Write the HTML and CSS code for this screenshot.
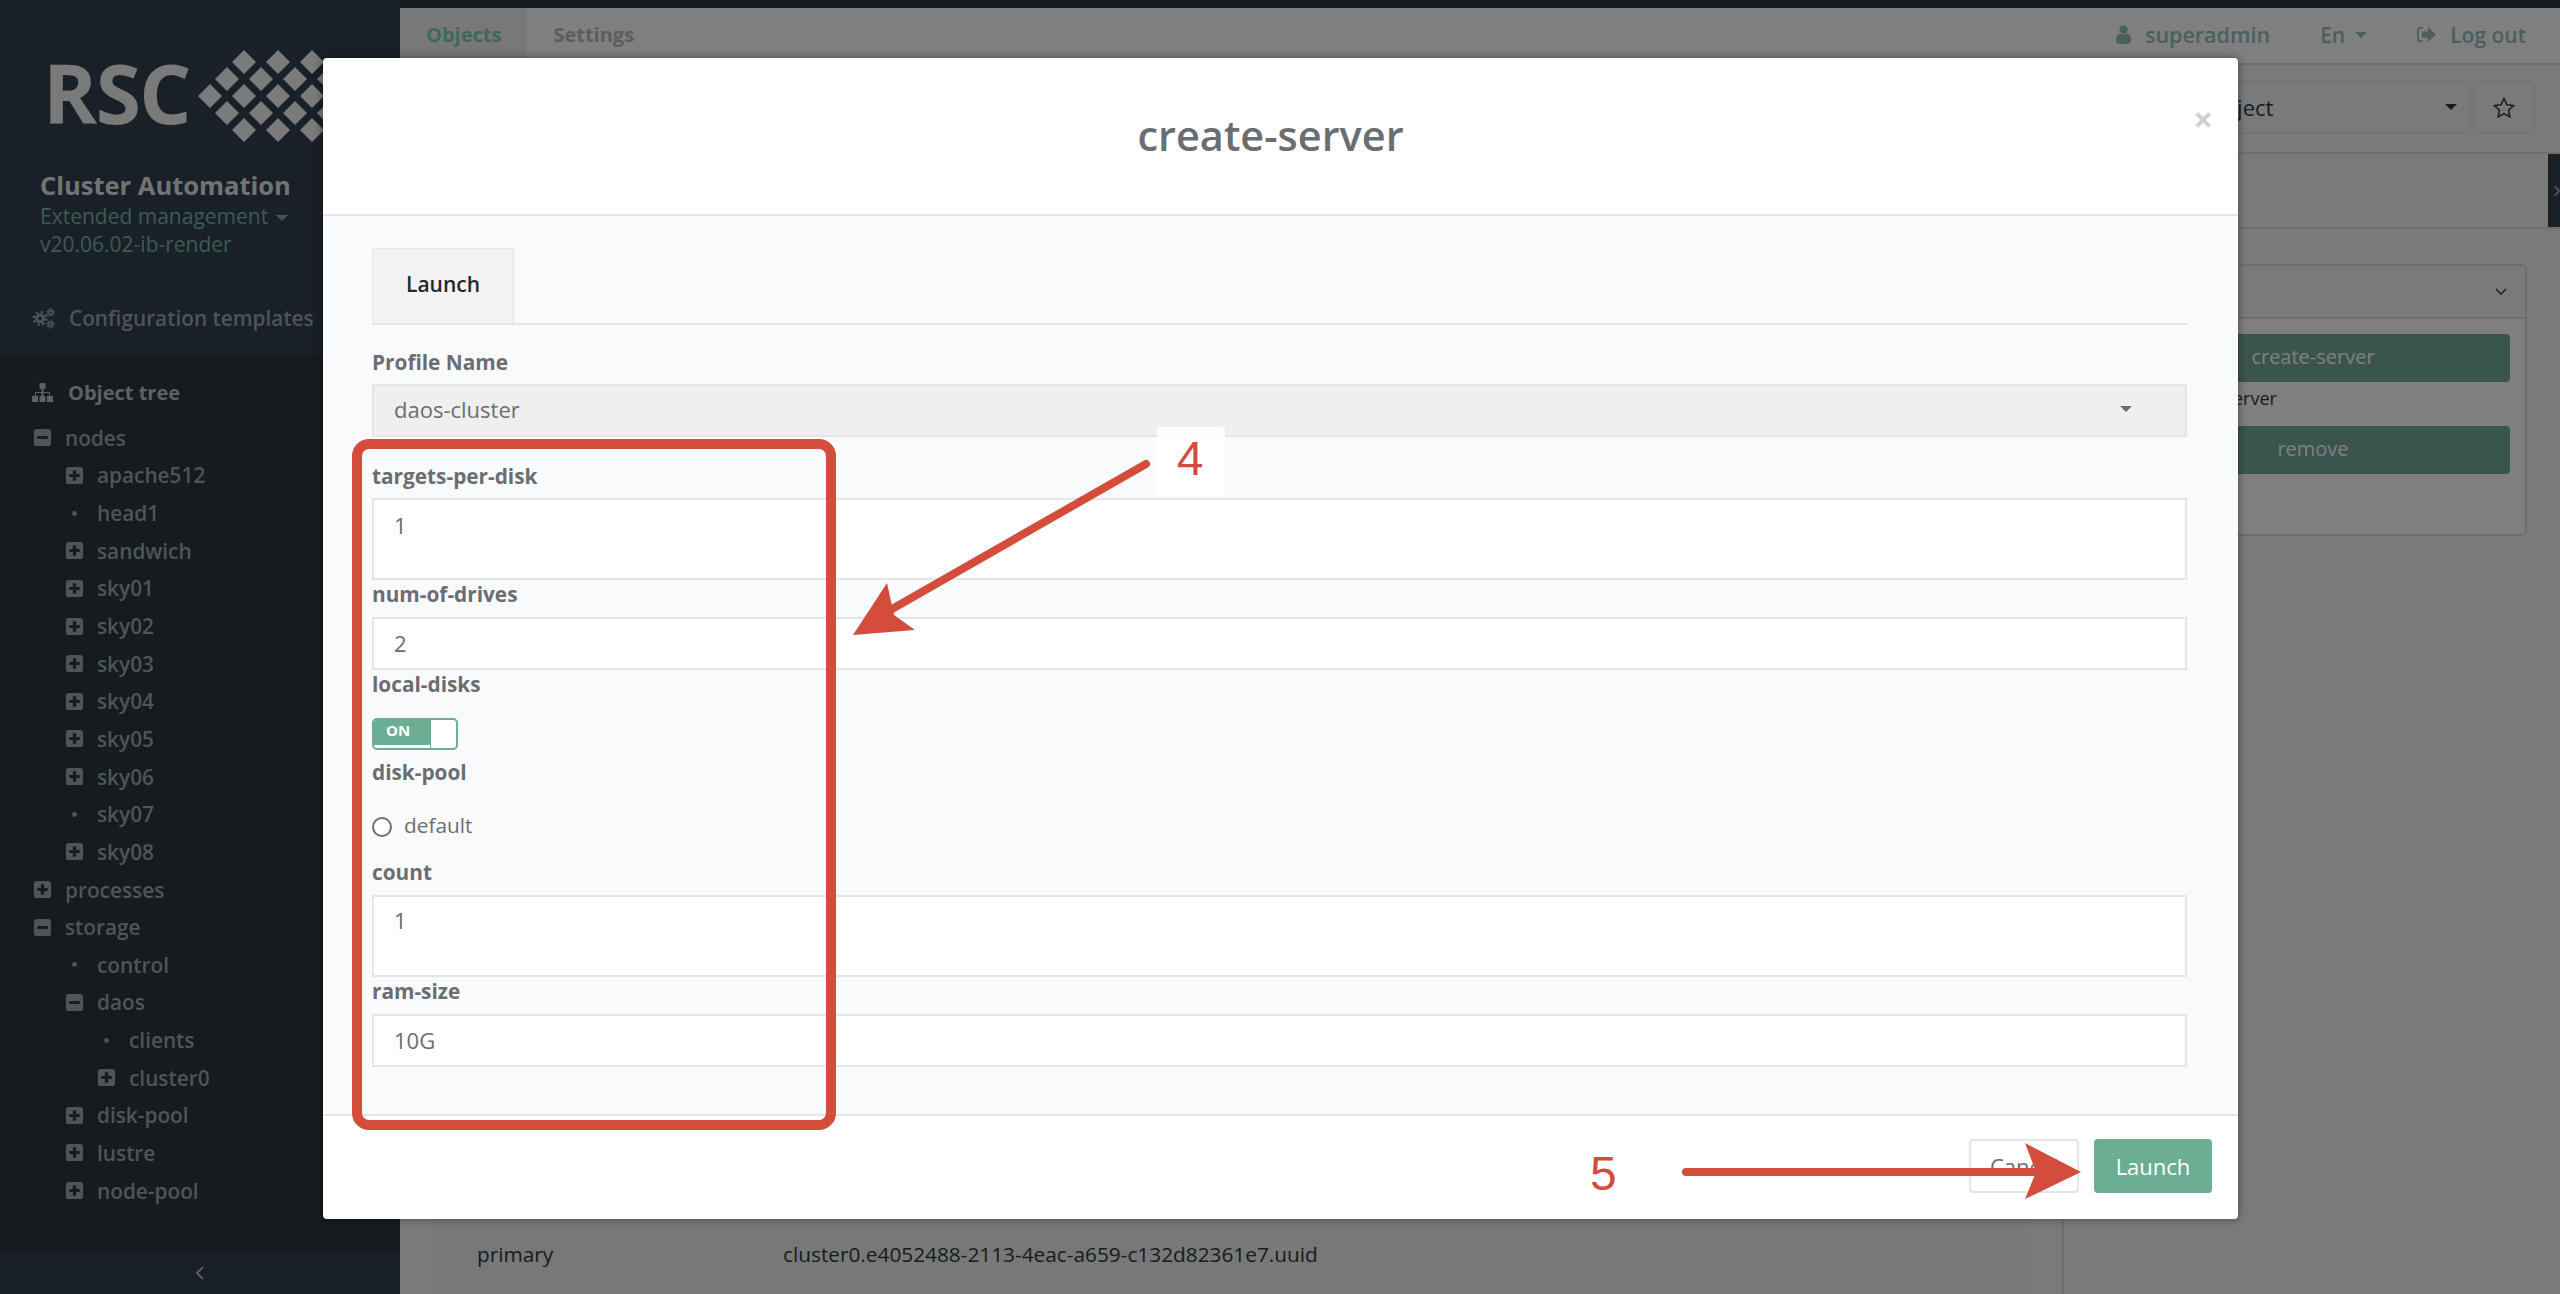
FILE: index.html
```html
<!DOCTYPE html>
<html lang="en">
<head>
    <meta charset="UTF-8">
    <title>create-server</title>
    <link rel="stylesheet" href="styles.css">
</head>
<body>
    <svg class="sprite" aria-hidden="true">
        <symbol id="plus" viewBox="0 0 20 20"><path fill-rule="evenodd" d="M4 1h12a3 3 0 0 1 3 3v12a3 3 0 0 1-3 3H4a3 3 0 0 1-3-3V4a3 3 0 0 1 3-3zM8.3 4.5v3.8H4.5v3.4h3.8v3.8h3.4v-3.8h3.8V8.3h-3.8V4.5z"/></symbol>
        <symbol id="minus" viewBox="0 0 20 20"><path fill-rule="evenodd" d="M4 1h12a3 3 0 0 1 3 3v12a3 3 0 0 1-3 3H4a3 3 0 0 1-3-3V4a3 3 0 0 1 3-3zM4.5 8.3v3.4h11V8.3z"/></symbol>
        <symbol id="dot" viewBox="0 0 20 20"><circle cx="10" cy="10" r="2.6"/></symbol>
    </svg>

    <div class="strip"></div>

    <div class="app">
        <aside class="sidebar">
            <div class="brand">
                <div class="logo">
                    <span class="logo-text">RSC</span>
                    <svg class="logo-mark" width="190" height="92" viewBox="0 0 190 92">
                        <path d="M46 4l12 12-12 12-12-12zM80 4l12 12-12 12-12-12zM114 4l12 12-12 12-12-12z"/>
                        <path d="M29 21l12 12-12 12-12-12zM63 21l12 12-12 12-12-12zM97 21l12 12-12 12-12-12zM131 21l12 12-12 12-12-12z"/>
                        <path d="M12 38l12 12-12 12L0 50zM46 38l12 12-12 12-12-12zM80 38l12 12-12 12-12-12zM114 38l12 12-12 12-12-12z"/>
                        <path d="M29 55l12 12-12 12-12-12zM63 55l12 12-12 12-12-12zM97 55l12 12-12 12-12-12zM131 55l12 12-12 12-12-12z"/>
                        <path d="M46 72l12 12-12 12-12-12zM80 72l12 12-12 12-12-12zM114 72l12 12-12 12-12-12z"/>
                    </svg>
                </div>
                <div class="brand-title">Cluster Automation</div>
                <div class="brand-sub">Extended management <span class="caret"></span></div>
                <div class="brand-sub">v20.06.02-ib-render</div>
                <div class="config-link">
                    <svg width="23" height="21" viewBox="0 0 23 21" fill="none" stroke="currentColor">
                        <circle cx="8" cy="10.5" r="3.4" stroke-width="3"/>
                        <circle cx="8" cy="10.5" r="6.3" stroke-width="2.4" stroke-dasharray="2.4 2.55"/>
                        <circle cx="18.5" cy="4.5" r="2" stroke-width="1.6"/>
                        <circle cx="18.5" cy="4.5" r="3.5" stroke-width="1.4" stroke-dasharray="1.6 1.15"/>
                        <circle cx="18.5" cy="16.5" r="2" stroke-width="1.6"/>
                        <circle cx="18.5" cy="16.5" r="3.5" stroke-width="1.4" stroke-dasharray="1.6 1.15"/>
                    </svg>
                    Configuration templates
                </div>
            </div>

            <div class="tree-section">
                <div class="tree-head">
                    <svg width="21" height="19" viewBox="0 0 21 19" fill="currentColor">
                        <path d="M7.5 0h6v6h-2v3H17a1 1 0 0 1 1 1v3h3v6h-6v-6h2v-3h-5.500v3h2v6h-6v-6h2v-3H4v3h2v6H0v-6h3v-3a1 1 0 0 1 1-1h5.500V6h-2z"/>
                    </svg>
                    Object tree
                </div>
                <div class="tree">
                    <div class="row lvl-0"><svg class="node"><use href="#minus"/></svg>nodes</div>
                    <div class="row lvl-1"><svg class="node"><use href="#plus"/></svg>apache512</div>
                    <div class="row lvl-1"><svg class="node"><use href="#dot"/></svg>head1</div>
                    <div class="row lvl-1"><svg class="node"><use href="#plus"/></svg>sandwich</div>
                    <div class="row lvl-1"><svg class="node"><use href="#plus"/></svg>sky01</div>
                    <div class="row lvl-1"><svg class="node"><use href="#plus"/></svg>sky02</div>
                    <div class="row lvl-1"><svg class="node"><use href="#plus"/></svg>sky03</div>
                    <div class="row lvl-1"><svg class="node"><use href="#plus"/></svg>sky04</div>
                    <div class="row lvl-1"><svg class="node"><use href="#plus"/></svg>sky05</div>
                    <div class="row lvl-1"><svg class="node"><use href="#plus"/></svg>sky06</div>
                    <div class="row lvl-1"><svg class="node"><use href="#dot"/></svg>sky07</div>
                    <div class="row lvl-1"><svg class="node"><use href="#plus"/></svg>sky08</div>
                    <div class="row lvl-0"><svg class="node"><use href="#plus"/></svg>processes</div>
                    <div class="row lvl-0"><svg class="node"><use href="#minus"/></svg>storage</div>
                    <div class="row lvl-1"><svg class="node"><use href="#dot"/></svg>control</div>
                    <div class="row lvl-1"><svg class="node"><use href="#minus"/></svg>daos</div>
                    <div class="row lvl-2"><svg class="node"><use href="#dot"/></svg>clients</div>
                    <div class="row lvl-2"><svg class="node"><use href="#plus"/></svg>cluster0</div>
                    <div class="row lvl-1"><svg class="node"><use href="#plus"/></svg>disk-pool</div>
                    <div class="row lvl-1"><svg class="node"><use href="#plus"/></svg>lustre</div>
                    <div class="row lvl-1"><svg class="node"><use href="#plus"/></svg>node-pool</div>
                </div>
            </div>

            <div class="sidebar-foot">
                <svg width="10" height="16" viewBox="0 0 10 16" fill="none" stroke="currentColor" stroke-width="1.600"><path d="M8 2L2 8l6 6"/></svg>
            </div>
        </aside>

        <main class="main">
            <nav class="topnav">
                <a class="tab active">Objects</a>
                <a class="tab">Settings</a>
                <div class="user-menu">
                    <span class="user-item user-name">
                        <svg width="15" height="19" viewBox="0 0 15 19" fill="currentColor"><circle cx="7.5" cy="4.500" r="4.200"/><path d="M0 15c0-4 1.500-6 4-6.500 2 1.300 5 1.300 7 0 2.500.5 4 2.500 4 6.500 0 2.500-1.500 4-3.500 4h-8C1.500 19 0 17.500 0 15z"/></svg>
                        superadmin
                    </span>
                    <span class="user-item lang">En <span class="caret"></span></span>
                    <span class="user-item">
                        <svg width="19" height="17" viewBox="0 0 19 17" fill="currentColor"><path d="M6 1H3a3 3 0 0 0-3 3v9a3 3 0 0 0 3 3h3v-1.800H3A1.200 1.200 0 0 1 1.800 13V4A1.200 1.200 0 0 1 3 2.800h3z"/><path d="M11 1l8 7.500L11 16v-4.500H5v-6h6z"/></svg>
                        Log out
                    </span>
                </div>
            </nav>

            <div class="toolbar">
                <div class="object-select">Select object<span class="caret"></span></div>
                <div class="star-btn">
                    <svg width="22" height="21" viewBox="0 0 22 21" fill="none" stroke="currentColor" stroke-width="1.500"><path d="M11 1.500l2.900 6.300 6.600.8-4.900 4.600 1.300 6.700-5.900-3.400-5.900 3.400 1.300-6.700L1.500 8.600l6.600-.8z"/></svg>
                </div>
            </div>

            <div class="infobar">
                <div class="handle">
                    <svg width="8" height="16" viewBox="0 0 8 16" fill="none" stroke="currentColor" stroke-width="1.500"><path d="M1 2l6 6-6 6"/></svg>
                </div>
            </div>

            <div class="content">
                <div class="left-col">
                    <div class="table-row">
                        <span class="cell-key">primary</span>
                        <span>cluster0.e4052488-2113-4eac-a659-c132d82361e7.uuid</span>
                    </div>
                </div>
                <div class="right-col">
                    <div class="panel">
                        <div class="panel-head">
                            <svg width="12" height="8" viewBox="0 0 12 8" fill="none" stroke="currentColor" stroke-width="1.500"><path d="M1 1l5 5 5-5"/></svg>
                        </div>
                        <div class="panel-body">
                            <div class="action-btn">create-server</div>
                            <div class="action-note">Creates new server</div>
                            <div class="action-btn">remove</div>
                        </div>
                    </div>
                </div>
            </div>
        </main>
    </div>

    <div class="backdrop"></div>

    <div class="modal">
        <div class="modal-head">
            <h2 class="modal-title">create-server</h2>
            <span class="modal-close">&times;</span>
        </div>

        <div class="modal-body">
            <div class="tabs">
                <div class="tabs-item">Launch</div>
            </div>

            <label class="field-label profile-label">Profile Name</label>
            <div class="control select">daos-cluster<span class="caret"></span></div>

            <div class="field first">
                <label class="field-label">targets-per-disk</label>
                <div class="control tall">1</div>
            </div>
            <div class="field">
                <label class="field-label">num-of-drives</label>
                <div class="control">2</div>
            </div>
            <div class="field">
                <label class="field-label toggle-label">local-disks</label>
                <div class="toggle">
                    <span class="toggle-on">ON</span>
                    <span class="toggle-knob"></span>
                </div>
            </div>
            <div class="field disk-pool">
                <label class="field-label">disk-pool</label>
                <div class="radio-row"><span class="radio"></span>default</div>
            </div>
            <div class="field">
                <label class="field-label">count</label>
                <div class="control tall tight">1</div>
            </div>
            <div class="field">
                <label class="field-label">ram-size</label>
                <div class="control">10G</div>
            </div>
        </div>

        <div class="modal-foot">
            <button class="btn btn-cancel">Cancel</button>
            <button class="btn btn-launch">Launch</button>
        </div>
    </div>

    <!-- annotations drawn on top of the screenshot -->
    <svg class="marks" width="2560" height="1294" viewBox="0 0 2560 1294">
        <rect x="357" y="444" width="474" height="681" rx="12" fill="none" stroke="#d44c3c" stroke-width="10"/>
        <path d="M1146 464L892 609" stroke="#d44c3c" stroke-width="8" stroke-linecap="round"/>
        <polygon points="853,635 887,583 894,615 915,630" fill="#d44c3c"/>
        <path d="M1686 1172H2040" stroke="#d44c3c" stroke-width="8" stroke-linecap="round"/>
        <polygon points="2081,1172 2025,1143 2036,1172 2025,1199" fill="#d44c3c"/>
    </svg>
    <div class="step step-4">4</div>
    <div class="step step-5">5</div>
</body>
</html>
```

FILE: styles.css
```css
* {
    margin: 0;
    padding: 0;
    box-sizing: border-box;
}

body {
    position: relative;
    width: 2560px;
    height: 1294px;
    overflow: hidden;
    font-family: "Open Sans", "Noto Sans", sans-serif;
    font-size: 22px;
    color: #2c3a3c;
    background-color: #f5f5f5;
}

.sprite {
    position: absolute;
    width: 0;
    height: 0;
}

.caret {
    display: inline-block;
    width: 0;
    height: 0;
    border-left: 6px solid transparent;
    border-right: 6px solid transparent;
    border-top: 6px solid currentColor;
    vertical-align: middle;
}

/* page under the dialog */
.strip {
    height: 8px;
    background-color: #2c3640;
}

.app {
    display: flex;
    height: 1286px;
}

.sidebar {
    display: flex;
    flex-direction: column;
    flex: none;
    width: 400px;
    margin-top: -8px;
    background-color: #344050;
    overflow: hidden;
}

.brand {
    height: 355px;
    padding: 0 0 0 40px;
}

.logo {
    display: flex;
    align-items: center;
    height: 92px;
    margin: 46px 0 0 3px;
    gap: 8px;
}

.logo-text {
    font-size: 82px;
    font-weight: 700;
    line-height: 92px;
    letter-spacing: -1.5px;
    color: #f4f4f4;
}

.logo-mark {
    flex: none;
    overflow: visible;
    fill: #f4f4f4;
}

.brand-title {
    margin-top: 30px;
    font-size: 25.5px;
    font-weight: 700;
    line-height: 34px;
    color: #e6e6e6;
}

.brand-sub {
    font-size: 21px;
    line-height: 28px;
    color: #7ab4a4;
}

.brand-sub .caret {
    margin-left: 2px;
}

.config-link {
    display: flex;
    align-items: center;
    gap: 14px;
    margin: 46px 0 0 -8px;
    font-size: 20.8px;
    font-weight: 600;
    line-height: 28px;
    color: #96aab2;
}

.tree-section {
    flex: 1;
    min-height: 0;
    padding-bottom: 32px;
    background-color: #2c363e;
}

.tree-head {
    display: flex;
    align-items: center;
    gap: 15px;
    height: 74px;
    padding-left: 32px;
    font-size: 20px;
    font-weight: 700;
    color: #b6c4ca;
}

.tree {
    height: 791px;
    margin-top: -10px;
    overflow: hidden;
}

.row {
    display: flex;
    align-items: center;
    gap: 13px;
    height: 37.65px;
    font-size: 20.8px;
    font-weight: 600;
    color: #9aaab2;
}

.node {
    flex: none;
    width: 19px;
    height: 19px;
    fill: currentColor;
}

.lvl-0 {
    padding-left: 33px;
}

.lvl-1 {
    padding-left: 65px;
}

.lvl-2 {
    padding-left: 97px;
}

.sidebar-foot {
    display: flex;
    flex: none;
    align-items: center;
    justify-content: center;
    height: 42px;
    color: #d0d4d8;
}

.main {
    display: flex;
    flex-direction: column;
    flex: 1;
    min-width: 0;
}

.topnav {
    display: flex;
    align-items: stretch;
    flex: none;
    height: 57px;
    background-color: #fff;
    border-bottom: 2px solid #dcdcdc;
}

.tab {
    display: flex;
    align-items: center;
    padding: 0 26px 2px;
    font-size: 20px;
    font-weight: 700;
    color: #b4bac2;
}

.tab.active {
    color: #78d2b8;
    background-color: #f0f0f0;
}

.user-menu {
    display: flex;
    align-items: center;
    gap: 50px;
    margin-left: auto;
    padding: 0 34px 2px 0;
}

.user-item {
    display: flex;
    align-items: center;
    gap: 14px;
    font-size: 21px;
    font-weight: 600;
    color: #96bebe;
}

.user-name {
    font-size: 21.5px;
}

.lang {
    gap: 10px;
}

.toolbar {
    display: flex;
    flex: none;
    justify-content: flex-end;
    gap: 2px;
    height: 88px;
    padding: 16px 25px 0 0;
}

.object-select {
    display: flex;
    align-items: center;
    justify-content: space-between;
    width: 351px;
    height: 53px;
    padding: 0 12px 2px 22px;
    font-size: 22px;
    background-color: #f5f5f5;
    border: 2px solid #e8e8e8;
}

.star-btn {
    display: flex;
    align-items: center;
    justify-content: center;
    width: 62px;
    height: 53px;
    border: 2px solid #e8e8e8;
    border-radius: 0 4px 4px 0;
}

.infobar {
    display: flex;
    flex: none;
    justify-content: flex-end;
    height: 77px;
    border-top: 2px solid #dcdcdc;
    border-bottom: 2px solid #dcdcdc;
    margin-top: -1px;
}

.handle {
    display: flex;
    align-items: center;
    width: 12px;
    padding-left: 6px;
    color: #d0d4d8;
    background-color: #344050;
}

.content {
    display: flex;
    flex: 1;
    min-height: 0;
}

.left-col {
    display: flex;
    flex-direction: column;
    justify-content: flex-end;
    flex: none;
    width: 1662px;
    padding: 0 32px 0 33px;
}

.table-row {
    display: flex;
    align-items: center;
    height: 78px;
    padding: 0 0 3px 44px;
    background-color: #f0f0f0;
    font-size: 20.8px;
}

.cell-key {
    width: 306px;
}

.right-col {
    flex: 1;
    padding: 35px 33px 0 35px;
    border-left: 2px solid #dcdcdc;
}

.panel {
    height: 272px;
    background-color: #fff;
    border: 2px solid #dcdcdc;
    border-radius: 5px;
}

.panel-head {
    display: flex;
    align-items: center;
    justify-content: flex-end;
    height: 53px;
    padding-right: 18px;
    background-color: #f4f4f4;
    border-bottom: 2px solid #dcdcdc;
}

.panel-body {
    padding: 15px 15px 0 15px;
}

.action-btn {
    height: 48px;
    font-size: 20px;
    line-height: 46px;
    text-align: center;
    color: #fff;
    background-color: #74a89c;
    border-radius: 4px;
}

.action-note {
    height: 44px;
    font-size: 18px;
    line-height: 32px;
}

.backdrop {
    position: absolute;
    top: 0;
    left: 0;
    width: 100%;
    height: 100%;
    background-color: rgba(0, 0, 0, 0.5);
}

/* dialog */
.modal {
    position: absolute;
    top: 58px;
    left: 323px;
    display: flex;
    flex-direction: column;
    width: 1915px;
    height: 1161px;
    color: #6b6e70;
    background-color: #fff;
    border-radius: 4px;
    box-shadow: 0 0 8px rgba(0, 0, 0, 0.45);
}

.modal-head {
    display: grid;
    grid-template-columns: 1fr auto 1fr;
    flex: none;
    height: 158px;
    border-bottom: 2px solid #e4e5e7;
}

.modal-title {
    grid-column: 2;
    align-self: center;
    margin: -2px 20px 0 0;
    font-size: 41.5px;
    font-weight: 600;
}

.modal-close {
    grid-column: 3;
    justify-self: end;
    margin: 36px 25px 0 0;
    font-size: 34px;
    font-weight: 700;
    line-height: 50px;
    color: #cfcfcf;
}

.modal-body {
    flex: 1;
    padding: 32px 51px 0 49px;
    background-color: #f9fafc;
}

.tabs {
    height: 77px;
    border-bottom: 2px solid #e4e5e7;
}

.tabs-item {
    width: 142px;
    height: 75px;
    font-size: 21px;
    font-weight: 600;
    line-height: 70px;
    text-align: center;
    color: #1f2a2c;
    background-color: #f2f2f2;
    border: 1px solid #e4e5e7;
    border-bottom: none;
}

.field-label {
    display: block;
    margin-bottom: 9px;
    font-size: 20.8px;
    font-weight: 700;
    line-height: 28px;
}

.profile-label {
    margin: 23px 0 8px;
}

.control {
    height: 53px;
    padding-left: 20px;
    font-size: 22px;
    line-height: 48px;
    background-color: #fff;
    border: 2px solid #e4e5e7;
}

.control.tall {
    height: 82px;
    line-height: 50px;
}

.control.tight {
    line-height: 46px;
}

.select {
    display: flex;
    align-items: center;
    justify-content: space-between;
    padding: 0 53px 4px 20px;
    background-color: #efefef;
}

.field {
    margin-top: 0;
}

.field.first {
    margin-top: 25px;
}

.field.first .field-label {
    margin-bottom: 8px;
}

.field .toggle-label {
    margin-bottom: 20px;
}

.toggle {
    display: flex;
    width: 86px;
    height: 32px;
    background-color: #fff;
    border: 2px solid #6bae94;
    border-radius: 5px;
    overflow: hidden;
}

.toggle-on {
    width: 56px;
    padding-left: 12px;
    font-size: 15px;
    font-weight: 700;
    line-height: 20px;
    color: #fff;
    background-color: #6bae94;
    border-bottom: 3px solid #fff;
}

.toggle-knob {
    flex: 1;
    border-left: 1px solid #6bae94;
}

.disk-pool {
    margin-top: 8px;
}

.radio-row {
    display: flex;
    align-items: center;
    gap: 12px;
    height: 40px;
    margin: 19px 0 13px;
    font-size: 20.8px;
}

.radio {
    width: 20px;
    height: 20px;
    margin-top: 3px;
    background-color: #fff;
    border: 2px solid #6b6e70;
    border-radius: 50%;
}

.modal-foot {
    display: flex;
    flex: none;
    align-items: center;
    justify-content: flex-end;
    gap: 15px;
    height: 105px;
    padding: 0 26px 3px 0;
    border-top: 2px solid #e4e5e7;
}

.btn {
    height: 54px;
    font-family: inherit;
    font-size: 22px;
    border-radius: 4px;
}

.btn-cancel {
    width: 110px;
    color: #6b6e70;
    background-color: #fff;
    border: 2px solid #e4e5e7;
}

.btn-launch {
    width: 118px;
    color: #fff;
    background-color: #6bae94;
    border: none;
}

/* annotations */
.marks {
    position: absolute;
    top: 0;
    left: 0;
}

.step {
    position: absolute;
    font-family: "Liberation Sans", Arial, sans-serif;
    font-size: 48px;
    line-height: 54px;
    color: #d44c3c;
}

.step-4 {
    top: 427px;
    left: 1157px;
    width: 68px;
    height: 69px;
    padding-right: 2px;
    line-height: 63px;
    text-align: center;
    background-color: rgba(255, 255, 255, 0.85);
    border-radius: 3px;
}

.step-5 {
    top: 1147px;
    left: 1590px;
}
```
